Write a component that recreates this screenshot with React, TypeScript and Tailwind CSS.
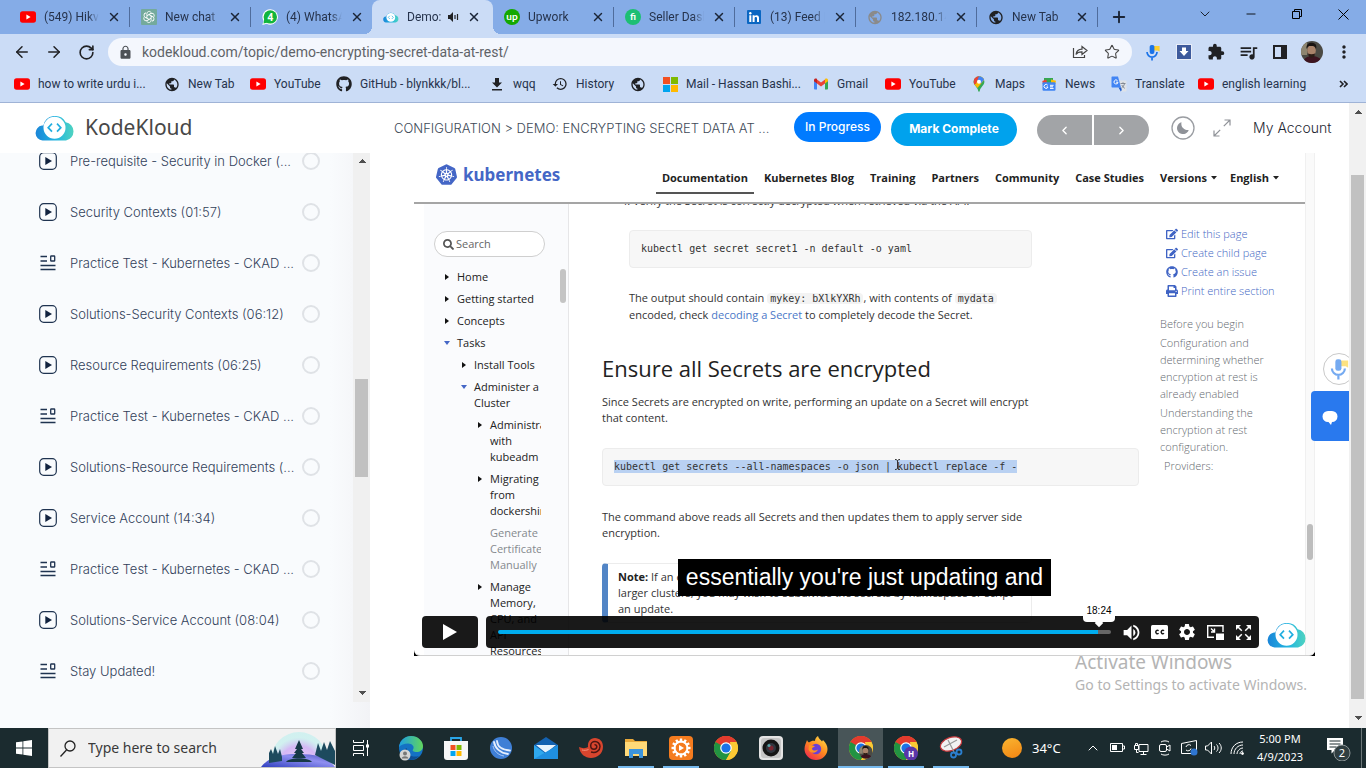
import React, { useState } from "react";
import {
  ArrowLeft, ArrowRight, RotateCw, X, Plus, ChevronDown, ChevronLeft, ChevronRight, ChevronUp, Minus, Star,
} from "lucide-react";
import { FaGithub, FaEdit, FaPrint, FaSearch } from "react-icons/fa";
import { MdPublic, MdHistory, MdExtension, MdQueueMusic, MdLock, MdVolumeUp, MdSettings, MdMoreVert } from "react-icons/md";
import { SiKubernetes } from "react-icons/si";

const UI = "font-['Noto_Sans','Open_Sans',sans-serif]";
const BROWSER = "font-['Roboto','Noto_Sans',sans-serif]";
const INTER = "font-['Inter',sans-serif]";
const OPEN = "font-['Open_Sans',sans-serif]";
const MONO = "font-['DejaVu_Sans_Mono',monospace]";

/* ---------- Icons ---------- */

const YouTube = () => (
  <svg width="16" height="16" viewBox="0 0 16 16">
    <rect x="0" y="2.3" width="16" height="11.4" rx="2.6" fill="#f00" />
    <path d="M6.4 5.6v4.8L10.6 8z" fill="#fff" />
  </svg>
);

const OpenAI = () => (
  <svg width="16" height="16" viewBox="0 0 16 16">
    <rect width="16" height="16" rx="1" fill="#74aa9c" />
    <g fill="none" stroke="#fff" strokeWidth=".9">
      {[0, 60, 120, 180, 240, 300].map((a) => (
        <path key={a} transform={`rotate(${a} 8 8)`} d="M8 5.6 5.9 6.8V4.6a2.3 2.3 0 0 1 3.9-1.5l.3.4" />
      ))}
    </g>
  </svg>
);

const Badge = ({ bg, children }: { bg: string; children: string }) => (
  <svg width="16" height="16" viewBox="0 0 16 16">
    <circle cx="8" cy="8" r="8" fill={bg} />
    <text x="8" y="11" textAnchor="middle" fontSize="10" fontWeight="700" fill="#fff" fontFamily="Lato, sans-serif">{children}</text>
  </svg>
);

const WhatsApp = () => (
  <svg width="16" height="16" viewBox="0 0 16 16">
    <path d="M8.3.2A7.7 7.7 0 1 1 4.600 14.700L.3 15.900l1.300-4A7.700 7.700 0 0 1 8.300.2z" fill="#fff" />
    <circle cx="8.300" cy="7.900" r="6.700" fill="#12b53c" />
    <path d="M2.300 10 1.500 14.600 6 13.500z" fill="#12b53c" />
    <text x="8.300" y="11.600" textAnchor="middle" fontSize="10" fontWeight="700" fill="#fff" fontFamily="Open Sans, sans-serif">4</text>
  </svg>
);

const LinkedIn = () => (
  <svg width="16" height="16" viewBox="0 0 16 16">
    <rect x="1" y="1" width="14" height="14" rx="1" fill="#0a66c2" />
    <circle cx="4.300" cy="4.300" r="1.200" fill="#fff" />
    <path d="M3.300 6.300h2V13h-2zM6.600 6.300h2v1c.9-1.700 4.400-1.600 4.400 1.500V13h-2V9.300c0-1.900-2.400-1.700-2.400 0V13h-2z" fill="#fff" />
  </svg>
);

const Cloud = ({ w, h, id }: { w: number; h: number; id: string }) => (
  <svg width={w} height={h} viewBox="0 0 40 26">
    <defs>
      <linearGradient id={id} x1="0" y1="0" x2="1" y2="0">
        <stop offset="0" stopColor="#1b85d8" />
        <stop offset=".55" stopColor="#22b6e0" />
        <stop offset="1" stopColor="#4fd3c0" />
      </linearGradient>
    </defs>
    <path d="M7.500 25.500a7.500 7.500 0 0 1-.5-14.900h1.400a12 12 0 0 1 22.300-3.400A9.300 9.300 0 0 1 31 25.500z" fill={`url(#${id})`} />
    <circle cx="19.500" cy="12.700" r="11" fill="#fff" />
    <path d="M17 8.700 13.200 12.700 17 16.700M22 8.700l3.800 4-3.800 4" fill="none" stroke="#22aee0" strokeWidth="1.700" />
  </svg>
);

const Download = () => (
  <svg width="16" height="16" viewBox="0 0 16 16" fill="#202124">
    <path d="M6 2h4v4.500h3L8 11.500 3 6.500h3zM3 13h10v1.600H3z" />
  </svg>
);

const Microsoft = ({ s = 15 }: { s?: number }) => (
  <svg width={s} height={s} viewBox="0 0 15 15">
    <path fill="#f25022" d="M0 0h7v7H0z" />
    <path fill="#7fba00" d="M8 0h7v7H8z" />
    <path fill="#00a4ef" d="M0 8h7v7H0z" />
    <path fill="#ffb900" d="M8 8h7v7H8z" />
  </svg>
);

const Gmail = () => (
  <svg width="16" height="16" viewBox="0 0 16 16">
    <path d="M1 4v8.500c0 .5.500 1 1 1h2V6.500z" fill="#4285f4" />
    <path d="M15 4v8.500c0 .5-.5 1-1 1h-2V6.500z" fill="#34a853" />
    <path d="M4 3.500 8 6.600l4-3.100v4L8 10.500 4 7.500z" fill="#ea4335" />
    <path d="M1 4c0-1.500 1.700-2.100 2.800-1.200L4 3v4.500L1 5.300z" fill="#c5221f" />
    <path d="M15 4c0-1.500-1.700-2.100-2.800-1.200L12 3v4.500l3-2.200z" fill="#fbbc04" />
  </svg>
);

const MapsPin = () => (
  <svg width="16" height="16" viewBox="0 0 16 16">
    <path d="M8 .3a5.400 5.400 0 0 1 5.400 5.400c0 3.800-4.200 5.300-4.700 9.600-.1.600-1.300.6-1.400 0C6.800 11 2.600 9.500 2.600 5.700A5.400 5.400 0 0 1 8 .3z" fill="#34a853" />
    <path d="M8 .3A5.400 5.400 0 0 1 13.100 4L6.500 12.100 3.600 8.800z" fill="#fbbc04" />
    <path d="M8 .3c2.300 0 4.300 1.400 5.100 3.400L9.800 7.500 5 3.300z" fill="#4285f4" />
    <path d="M3.900 2.300A5.400 5.400 0 0 1 8 .3L5 7.800 3.400 8.500C2.300 6.500 2.400 4.200 3.900 2.300z" fill="#ea4335" />
    <circle cx="8" cy="5.700" r="2" fill="#fff" />
  </svg>
);

const NewsIcon = () => (
  <svg width="16" height="16" viewBox="0 0 16 16">
    <path d="M3 2h9v6H3z" fill="#34a853" />
    <path d="m1.300 5 4-1.500 1 5H2z" fill="#ea4335" />
    <path d="m10 3.500 5 1.300-1 4h-4z" fill="#fbbc04" />
    <rect x="1.500" y="6.300" width="13" height="8.500" rx="1" fill="#4285f4" />
    <path d="M6.700 9.200A2 2 0 1 0 7 11H5.400M9 9.300h3.600M9 10.800h3M9 12.400h3.600" stroke="#fff" strokeWidth="1" fill="none" />
  </svg>
);

const TranslateIcon = () => (
  <svg width="16" height="16" viewBox="0 0 16 16">
    <path d="M7 4.500h7.500c.6 0 1 .4 1 1V14.500c0 .6-.4 1-1 1H10z" fill="#dfe3e8" />
    <path d="M1.500.5H7l3 11H1.500c-.6 0-1-.4-1-1v-9c0-.6.4-1 1-1z" fill="#4285f4" />
    <path d="M7.500 11.500H10l.8 2.500-1 1.500z" fill="#1a5bd0" />
    <path d="M6.500 4.600A2 2 0 1 0 7 6.200H5.100" fill="none" stroke="#fff" strokeWidth="1" />
    <path d="M9.500 7.500h5M12 6.300v1.200M13.500 7.500c-.3 2-1.500 3.500-3 4.500M10.800 9c.6 1.500 1.700 2.500 3 3.300" fill="none" stroke="#7a828c" strokeWidth=".9" />
  </svg>
);

const MicIcon = ({ s }: { s: number }) => (
  <svg width={s} height={s} viewBox="0 0 18 18">
    <path d="M10 2h6.500v6l-2-1.200H10z" fill="#fbcf2f" />
    <rect x="6" y="1" width="5" height="9.500" rx="2" fill="#1a73e8" />
    <path d="M3.200 8.500a5.300 5.300 0 0 0 10.600 0M8.500 14v3.500" fill="none" stroke="#1a73e8" strokeWidth="1.800" />
  </svg>
);

const DownloadExt = () => (
  <svg width="16" height="16" viewBox="0 0 16 16">
    <rect x=".5" y=".5" width="15" height="15" fill="#3d5a9c" stroke="#e8edf8" />
    <path d="M6 3.500h4v3.500h2.500L8 12 3.500 7H6z" fill="#fff" />
  </svg>
);

const Avatar = ({ s }: { s: number }) => (
  <svg width={s} height={s} viewBox="0 0 22 22">
    <clipPath id={`av${s}`}><circle cx="11" cy="11" r="11" /></clipPath>
    <g clipPath={`url(#av${s})`}>
      <rect width="22" height="22" fill="#4b4a44" />
      <rect x="0" y="0" width="6" height="14" fill="#8d8570" />
      <path d="M2 22c1-5 4-7 9-7s9 2 11 7z" fill="#3d1420" />
      <ellipse cx="10.500" cy="9.500" rx="4.300" ry="5.800" fill="#a9836a" />
      <path d="M5.500 8C5 3 8 1.500 11 1.700c4 .2 5 3.300 4 6.300-1-2.500-2-3-5-3-2.500 0-3.500.5-4.500 3z" fill="#191412" />
      <path d="M7 12.500c2 1 5 1 7 0-.2 3-1.800 4.200-3.500 4.200S7.200 15 7 12.500z" fill="#2c1d16" />
    </g>
  </svg>
);

const PlaySquare = () => (
  <svg width="18" height="18" viewBox="0 0 18 18">
    <rect x=".7" y=".7" width="16.600" height="16.600" rx="4" fill="none" stroke="#1f3350" strokeWidth="1.200" />
    <path d="M6.300 5v8l6.700-4z" fill="#12233f" />
  </svg>
);

const QuizLines = () => (
  <svg width="18" height="18" viewBox="0 0 18 18" fill="none" stroke="#1f3350" strokeWidth="1.300">
    <path d="M1.500 2.500h6.500M1.500 7h6.500M1.500 11.500h15M1.500 15.500h15" />
    <rect x="11.700" y="2" width="4" height="5" rx=".6" />
  </svg>
);

const Triangle = ({ dir, color = "#505050" }: { dir: "up" | "down"; color?: string }) => (
  <svg width="8" height="5" viewBox="0 0 8 5" shapeRendering="crispEdges">
    <path d={dir === "up" ? "M4 0 8 4H0z" : "M0 0h8L4 4z"} fill={color} />
  </svg>
);

const ChromeLogo = ({ children }: { children?: React.ReactNode }) => (
  <svg width="24" height="24" viewBox="0 0 24 24">
    <circle cx="12" cy="12" r="12" fill="#fbc116" />
    <path d="M12 12 1.600 6A12 12 0 0 1 22.400 6z" fill="#e33b2e" />
    <path d="M1.600 6A12 12 0 0 0 12 24l5.200-9L12 12z" fill="#229342" />
    <path d="M22.400 6A12 12 0 0 1 12 24l5.200-9L16 6z" fill="#fcc934" />
    <path d="M1.600 6 6.800 15 12 12V6z" fill="#229342" />
    <path d="M12 6h10.400A12 12 0 0 0 1.600 6L6.800 9z" fill="#e33b2e" />
    <circle cx="12" cy="12" r="5.800" fill="#fff" />
    <circle cx="12" cy="12" r="4.600" fill="#1a73e8" />
    {children}
  </svg>
);

/* ---------- Browser chrome ---------- */

const tabs: { title: string; icon: React.ReactNode; active?: boolean }[] = [
  { title: "(549) Hikvi", icon: <YouTube /> },
  { title: "New chat", icon: <OpenAI /> },
  { title: "(4) WhatsA", icon: <WhatsApp /> },
  { title: "Demo:", icon: <Cloud w={16} h={11} id="c0" />, active: true },
  { title: "Upwork", icon: <Badge bg="#14a800">up</Badge> },
  { title: "Seller Dash", icon: <Badge bg="#1dbf73">fi</Badge> },
  { title: "(13) Feed |", icon: <LinkedIn /> },
  { title: "182.180.14", icon: <MdPublic size={17} color="#8a8a8a" /> },
  { title: "New Tab", icon: <MdPublic size={17} color="#202124" /> },
];

function TabStrip() {
  return (
    <div className={`flex h-[34px] shrink-0 bg-[#85ace7] pl-[9px] text-[#26334c] ${BROWSER}`}>
      {tabs.map((t, i) => (
        <div
          key={i}
          className={
            t.active
              ? "relative flex w-[121px] items-center rounded-t-lg bg-[#cbdcf6] pl-[11px] pr-1 before:absolute before:bottom-0 before:-left-2 before:size-2 before:bg-[radial-gradient(circle_at_0_0,transparent_8px,#cbdcf6_8px)] after:absolute after:bottom-0 after:-right-2 after:size-2 after:bg-[radial-gradient(circle_at_100%_0,transparent_8px,#cbdcf6_8px)]"
              : "flex w-[121px] items-center pl-[11px]"
          }
        >
          <span className="flex w-4 shrink-0 justify-center">{t.icon}</span>
          <span className="ml-2 min-w-0 flex-1 whitespace-nowrap text-xs [mask-image:linear-gradient(to_right,black_80%,transparent)]">
            {t.title}
          </span>
          {t.active && (
            <svg className="shrink-0" width="12" height="12" viewBox="0 0 12 12" fill="none" stroke="#202124">
              <path d="M1 4h2l3-3v10L3 8H1z" fill="#202124" stroke="none" />
              <path d="M8 4v4M10.500 3v6" strokeWidth="1.200" />
            </svg>
          )}
          <button aria-label="Close tab" className="mx-2 shrink-0 text-[#1b2537]">
            <X size={14} strokeWidth={2.500} />
          </button>
          {!t.active && i !== 2 && <span className="h-5 w-px bg-[#4f6c9c]" />}
        </div>
      ))}
      <button aria-label="New tab" className="ml-3 text-[#1b2537]"><Plus size={18} strokeWidth={2.500} /></button>
      <div className="ml-auto flex items-center pb-1.5 text-black">
        <button aria-label="Search tabs" className="flex w-[46px] justify-center"><ChevronDown size={16} strokeWidth={1.200} /></button>
        <button aria-label="Minimize" className="flex w-[46px] justify-center"><Minus size={14} strokeWidth={1.500} /></button>
        <button aria-label="Restore" className="flex w-[46px] justify-center">
          <svg width="10" height="10" viewBox="0 0 10 10" fill="none" stroke="#000"><path d="M.5 2.500h7v7h-7zM2.500 2.500v-2h7v7h-2" /></svg>
        </button>
        <button aria-label="Close" className="flex w-[46px] justify-center">
          <svg width="11" height="11" viewBox="0 0 11 11" stroke="#000"><path d="M.5.5l10 10M10.500.5l-10 10" /></svg>
        </button>
      </div>
    </div>
  );
}

function Toolbar() {
  return (
    <div className={`flex h-[34px] shrink-0 items-center bg-[#cbdcf6] px-1.5 pb-0.5 pt-1 text-[#202124] ${BROWSER}`}>
      <button aria-label="Back" className="flex w-8 justify-center"><ArrowLeft size={18} /></button>
      <button aria-label="Forward" className="flex w-8 justify-center"><ArrowRight size={18} /></button>
      <button aria-label="Reload" className="flex w-8 justify-center"><RotateCw size={17} strokeWidth={2.300} /></button>
      <div className="relative ml-1.5 flex h-7 flex-1 items-center rounded-full bg-[#f4f7fd] pl-2.5 pr-2.5">
        <MdLock size={15} color="#4d5156" />
        <label htmlFor="url" className="sr-only">Address</label>
        <input id="url" type="text" defaultValue="kodekloud.com/topic/demo-encrypting-secret-data-at-rest/" className="ml-[9px] min-w-0 flex-1 bg-transparent text-sm text-[#5f6368] outline-none" />
        <button aria-label="Share" className="flex w-8 justify-center">
          <svg width="16" height="16" viewBox="0 0 16 16" fill="none" stroke="#444" strokeWidth="1.200">
            <path d="M1.500 4v9.500h11V11M10 5.200V2.500l5 4-5 4V7.800C7 7.700 5.200 8.500 4 10.500 4.500 7 6.500 5.300 10 5.200z" />
          </svg>
        </button>
        <button aria-label="Bookmark" className="-mr-1.5 flex w-8 justify-center"><Star size={16} strokeWidth={1.600} color="#444" /></button>
      </div>
      <div className="ml-1 flex items-center [&>button]:flex [&>button]:w-8 [&>button]:justify-center">
        <button aria-label="Voice search"><MicIcon s={17} /></button>
        <button aria-label="Downloader"><DownloadExt /></button>
        <button aria-label="Extensions"><MdExtension size={18} /></button>
        <button aria-label="Media"><MdQueueMusic size={21} /></button>
        <button aria-label="Side panel">
          <svg width="14" height="14" viewBox="0 0 14 14"><path d="M1 1h12v12H1z" fill="none" stroke="#202124" strokeWidth="2" /><path d="M8 1h5v12H8z" fill="#202124" /></svg>
        </button>
        <button aria-label="Profile"><Avatar s={22} /></button>
        <button aria-label="Menu"><MdMoreVert size={20} /></button>
      </div>
    </div>
  );
}

const globe = <MdPublic size={17} color="#202124" />;
const bookmarks: { w: string; icon: React.ReactNode; text: string }[] = [
  { w: "w-[150px]", icon: <YouTube />, text: "how to write urdu i..." },
  { w: "w-[86px]", icon: globe, text: "New Tab" },
  { w: "w-[86px]", icon: <YouTube />, text: "YouTube" },
  { w: "w-[153px]", icon: <FaGithub size={16} color="#202124" />, text: "GitHub - blynkkk/bl..." },
  { w: "w-[63px]", icon: <Download />, text: "wqq" },
  { w: "w-[78px]", icon: <MdHistory size={16} color="#202124" />, text: "History" },
  { w: "w-[32px]", icon: globe, text: "" },
  { w: "w-[151px]", icon: <Microsoft />, text: "Mail - Hassan Bashi..." },
  { w: "w-[72px]", icon: <Gmail />, text: "Gmail" },
  { w: "w-[86px]", icon: <YouTube />, text: "YouTube" },
  { w: "w-[70px]", icon: <MapsPin />, text: "Maps" },
  { w: "w-[70px]", icon: <NewsIcon />, text: "News" },
  { w: "w-[87px]", icon: <TranslateIcon />, text: "Translate" },
  { w: "w-[112px]", icon: <YouTube />, text: "english learning" },
];

function Bookmarks() {
  return (
    <div className={`flex h-[35px] shrink-0 items-center border-b border-[#9fb3d6] bg-[#cbdcf6] pb-0.5 pl-3.5 pr-[18px] text-xs text-[#26334c] ${BROWSER}`}>
      {bookmarks.map((b, i) => (
        <a key={i} href="#" aria-label={b.text || "New Tab"} className={`flex shrink-0 items-center gap-2 whitespace-nowrap ${b.w}`}>
          <span className="flex w-4 shrink-0 justify-center">{b.icon}</span>
          {b.text && <span>{b.text}</span>}
        </a>
      ))}
      <button aria-label="More bookmarks" className="ml-auto">
        <svg width="9" height="8" viewBox="0 0 9 8" fill="none" stroke="#202124" strokeWidth="1.600"><path d="m1 1 3 3-3 3M5 1l3 3-3 3" /></svg>
      </button>
    </div>
  );
}

/* ---------- Course page ---------- */

function PageHeader() {
  return (
    <header className={`flex h-[50px] shrink-0 items-center bg-white pl-[35px] pr-5 ${INTER}`}>
      <a href="#" className="flex w-[359px] shrink-0 items-center gap-2.5">
        <Cloud w={40} h={26} id="c1" />
        <span className={`text-[21px] text-[#484848] ${UI}`}>KodeKloud</span>
      </a>
      <span className="flex-1 whitespace-nowrap pt-0.5 text-[13px] font-light text-[#404a57]">CONFIGURATION &gt; DEMO: ENCRYPTING SECRET DATA AT ...</span>
      <button className="mb-0.5 h-[30px] w-[87px] rounded-full bg-[#007bff] text-xs font-medium text-white">In Progress</button>
      <button className="ml-2.5 mt-0.5 h-[33px] w-[126px] rounded-full bg-[#00a2ed] text-xs font-bold text-white">Mark Complete</button>
      <div className="ml-5 mt-1 flex gap-0.5 text-white">
        <button aria-label="Previous" className="flex h-[30px] w-[55px] items-center justify-center rounded-l-full bg-[#a2a4a7]"><ChevronLeft size={13} strokeWidth={2.500} /></button>
        <button aria-label="Next" className="flex h-[30px] w-[55px] items-center justify-center rounded-r-full bg-[#a2a4a7]"><ChevronRight size={13} strokeWidth={2.500} /></button>
      </div>
      <button aria-label="Dark mode" className="ml-[22px]">
        <svg width="24" height="24" viewBox="0 0 24 24">
          <circle cx="12" cy="12" r="11" fill="none" stroke="#9a9da2" strokeWidth="1.300" />
          <path d="M10.500 6.300A6 6 0 1 0 17.700 14 6.300 6.300 0 0 1 10.500 6.300z" fill="#8f9298" />
        </svg>
      </button>
      <button aria-label="Full width" className="ml-[18px]">
        <svg width="18" height="18" viewBox="0 0 18 18" fill="none" stroke="#8f9298" strokeWidth="1.200">
          <path d="M10.800 7.200 17 1M11.500 1H17v5.500M7.200 10.800 1 17M1 11.500V17h5.500" />
        </svg>
      </button>
      <a href="#" className="ml-[22px] w-[76px] whitespace-nowrap text-sm font-light text-[#1f2733]">My Account</a>
    </header>
  );
}

const lessons: { q?: boolean; t: string }[] = [
  { t: "Pre-requisite - Security in Docker (..." },
  { t: "Security Contexts (01:57)" },
  { q: true, t: "Practice Test - Kubernetes - CKAD ..." },
  { t: "Solutions-Security Contexts (06:12)" },
  { t: "Resource Requirements (06:25)" },
  { q: true, t: "Practice Test - Kubernetes - CKAD ..." },
  { t: "Solutions-Resource Requirements (..." },
  { t: "Service Account (14:34)" },
  { q: true, t: "Practice Test - Kubernetes - CKAD ..." },
  { t: "Solutions-Service Account (08:04)" },
  { q: true, t: "Stay Updated!" },
];

function Sidebar() {
  return (
    <aside className={`flex w-[370px] shrink-0 overflow-hidden bg-[linear-gradient(to_left,#f2f3f6,#f9fbfd_40px)] pb-[26px] ${INTER}`}>
      <ul className="-mt-[18px] flex-1">
        {lessons.map((l, i) => (
          <li key={i} className="flex h-[51px] items-center pl-[39px] pr-[33px]">
            {l.q ? <QuizLines /> : <PlaySquare />}
            <label htmlFor={`l${i}`} className="ml-[13px] flex-1 whitespace-nowrap pt-0.5 text-[13px] font-light text-[#32415a]">{l.t}</label>
            <input id={`l${i}`} type="checkbox" className="size-[18px] shrink-0 appearance-none rounded-full border-2 border-[#dfe2e6]" />
          </li>
        ))}
      </ul>
      <div className="flex w-[17px] flex-col items-center justify-between bg-[#f0f0f0] py-1.5">
        <Triangle dir="up" />
        <div className="mb-auto mt-[215px] h-[98px] w-[13px] bg-[#c1c1c1]" />
        <Triangle dir="down" />
      </div>
    </aside>
  );
}

type Node = { lv: number; t: string; s?: "open" | "closed" };
const tree: Node[] = [
  { lv: 0, t: "Home", s: "closed" },
  { lv: 0, t: "Getting started", s: "closed" },
  { lv: 0, t: "Concepts", s: "closed" },
  { lv: 0, t: "Tasks", s: "open" },
  { lv: 1, t: "Install Tools", s: "closed" },
  { lv: 1, t: "Administer a Cluster", s: "open" },
  { lv: 2, t: "Administration with kubeadm", s: "closed" },
  { lv: 2, t: "Migrating from dockershim", s: "closed" },
  { lv: 2, t: "Generate Certificates Manually" },
  { lv: 2, t: "Manage\nMemory,\nCPU, and\nAPI\nResources", s: "closed" },
];
const indent = ["pl-[9px]", "pl-[26px]", "pl-[42px]"];
const labelWidth = ["w-[84px]", "w-[72px]", "w-[72px]"];

const Code = ({ children }: { children: string }) => (
  <code className={`rounded-sm bg-[#f3f3f3] px-[3px] text-[10px] ${MONO}`}>{children}</code>
);

function KubernetesDocs() {
  const nav = ["Documentation", "Kubernetes Blog", "Training", "Partners", "Community", "Case Studies", "Versions", "English"];
  return (
    <div className={`flex h-full text-[11px] leading-4 text-[#333] ${OPEN}`}>
      <div className="flex min-w-0 flex-1 flex-col">
        <div className="flex h-[51px] shrink-0 border-b-2 border-[#a5a5a5] pl-[22px] pr-[26px]">
          <a href="#" className="flex items-center gap-1.5 pb-1.5 text-[#4466c6]">
            <SiKubernetes size={21} />
            <span className={`text-[17px] font-bold ${UI}`}>kubernetes</span>
          </a>
          <nav className="ml-auto flex items-start gap-4 pt-[17px] font-bold text-[#222]">
            {nav.map((n, i) => (
              <a
                key={n}
                href="#"
                className={
                  i === 0
                    ? "relative h-6 after:absolute after:-left-1.5 after:-right-1.5 after:bottom-0 after:h-0.5 after:bg-[#555]"
                    : i === 7
                      ? "-ml-[3px] flex items-center gap-1"
                      : "flex items-center gap-1"
                }
              >
                {n}
                {i > 5 && <svg width="6" height="4" viewBox="0 0 6 4"><path d="M0 0h6L3 3.500z" fill="#222" /></svg>}
              </a>
            ))}
          </nav>
        </div>
        <div className="flex min-h-0 flex-1 overflow-hidden">
          <div className="ml-2.5 flex w-[145px] shrink-0 flex-col border-r border-[#e6e6e8] bg-[#fafbfd] pl-2.5 pt-[27px]">
            <label className="flex h-[26px] w-[111px] shrink-0 items-center gap-0.5 rounded-full border border-[#cfcfcf] bg-white pl-2">
              <FaSearch size={11} color="#555" />
              <input aria-label="Search" placeholder="Search" className="w-20 bg-transparent outline-none placeholder:text-[#666]" />
            </label>
            <div className="mt-3 flex">
              <ul className="flex w-[107px] shrink-0 flex-col gap-1.5 overflow-hidden text-[#222]">
                {tree.map((n) => (
                  <li key={n.t} className={`flex gap-1.5 ${indent[n.lv]}`}>
                    <span className="flex h-4 w-2 shrink-0 items-center justify-center">
                      {n.s === "closed" && <svg width="4" height="6" viewBox="0 0 4 6"><path d="M0 0v6l4-3z" fill="#111" /></svg>}
                      {n.s === "open" && <svg width="6" height="4" viewBox="0 0 6 4"><path d="M0 0h6L3 4z" fill="#4466c6" /></svg>}
                    </span>
                    <span className={`shrink-0 whitespace-pre-line ${labelWidth[n.lv]} ${n.s ? "" : "text-[#85898e]"}`}>{n.t}</span>
                  </li>
                ))}
              </ul>
              <div className="ml-[19px] h-[34px] w-1.5 rounded-full bg-[#c4c4c4]" />
            </div>
          </div>
          <main className="flex-1 pl-[33px]">
            <div className="-mt-[11px] flex flex-col items-start">
              <p className="ml-[19px] whitespace-nowrap">4. Verify the Secret is correctly decrypted when retrieved via the API:</p>
              <pre className={`ml-[27px] mt-[21px] h-[38px] w-[403px] rounded border border-[#ececec] bg-[#f7f7f7] px-[11px] py-2.5 text-[10px] ${MONO}`}>kubectl get secret secret1 -n default -o yaml</pre>
              <p className="ml-[27px] mt-[22px] whitespace-nowrap">
                The output should contain <Code>mykey: bXlkYXRh</Code>, with contents of <Code>mydata</Code><br />
                encoded, check <a href="#" className="text-[#4a78c8]">decoding a Secret</a> to completely decode the Secret.
              </p>
              <h2 className="mt-[31px] whitespace-nowrap text-[22px] leading-7 text-[#222]">Ensure all Secrets are encrypted</h2>
              <p className="mt-3 whitespace-nowrap">
                Since Secrets are encrypted on write, performing an update on a Secret will encrypt<br />that content.
              </p>
              <pre className={`mt-[22px] h-[38px] w-[537px] rounded border border-[#ececec] bg-[#f7f7f7] px-[11px] py-2.5 text-[10px] ${MONO}`}>
                <mark className="bg-[#b9d1f2] py-px text-[#333]">kubectl get secrets --all-namespaces -o json | kubectl replace -f -</mark>
              </pre>
              <p className="mt-[23px] whitespace-nowrap">
                The command above reads all Secrets and then updates them to apply server side<br />encryption.
              </p>
              <div className="mt-[22px] w-[430px] whitespace-nowrap rounded border border-l-[6px] border-[#ececec] border-l-[#5285c6] px-2.5 py-[5px]">
                <strong className="text-[#222]">Note:</strong> If an error occurs due to a conflicting write, retry the command. For<br />
                larger clusters, you may wish to subdivide the secrets by namespace or script<br />
                an update.
              </div>
            </div>
          </main>
          <div className="w-[145px] shrink-0 pt-[21px] font-light leading-[17px]">
            <ul className="ml-1.5 flex flex-col gap-0.5 text-[#4468c4]">
              {[
                [<FaEdit size={12} color="#3f63c4" />, "Edit this page"],
                [<FaEdit size={12} color="#3f63c4" />, "Create child page"],
                [<FaGithub size={12} color="#3f63c4" />, "Create an issue"],
                [<FaPrint size={12} color="#3f63c4" />, "Print entire section"],
              ].map(([ic, t], i) => (
                <li key={i}><a href="#" className="flex items-center gap-[3px] whitespace-nowrap">{ic}{t}</a></li>
              ))}
            </ul>
            <ul className="mt-4 flex flex-col gap-0.5 whitespace-nowrap text-[#666a70]">
              <li>Before you begin</li>
              <li>Configuration and<br />determining whether<br />encryption at rest is<br />already enabled</li>
              <li>Understanding the<br />encryption at rest<br />configuration.</li>
              <li className="pl-1">Providers:</li>
            </ul>
          </div>
        </div>
      </div>
      <div className="flex w-2.5 flex-col items-center border-x border-[#f0f0f0] bg-[#fafafa] pt-[371px]">
        <div className="h-9 w-1.5 rounded-full bg-[#bdbdbd]" />
      </div>
    </div>
  );
}

function VideoControls() {
  const [pos, setPos] = useState(979);
  return (
    <div className="absolute inset-x-2 bottom-[7px] flex items-center">
      <button aria-label="Play" className="flex h-8 w-14 items-center justify-center rounded bg-black/90">
        <svg width="14" height="16" viewBox="0 0 14 16"><path d="M0 0v16l14-8z" fill="#fff" /></svg>
      </button>
      <div className="ml-2 flex h-8 flex-1 items-center rounded bg-black/90 pl-3 pr-0.5 text-white">
        <div className="relative mr-1.5 flex flex-1 items-center">
          <input
            aria-label="Progress"
            type="range"
            min={0}
            max={1000}
            value={pos}
            onChange={(e) => setPos(Number(e.target.value))}
            className="h-1 w-full appearance-none rounded-sm [&::-webkit-slider-thumb]:h-1 [&::-webkit-slider-thumb]:w-0 [&::-webkit-slider-thumb]:appearance-none"
            style={{ background: `linear-gradient(to right, #00adef ${pos / 10}%, #666 ${pos / 10}%)` }}
          />
          <output className="absolute -top-[27px] right-[-4px] flex h-[19px] w-8 justify-center rounded-sm bg-white pt-0.5 text-[10px] leading-3 text-black font-['Liberation_Sans',sans-serif] after:absolute after:top-[17px] after:size-1.5 after:rotate-45 after:bg-white">18:24</output>
        </div>
        <div className="flex items-center [&>button]:flex [&>button]:w-7 [&>button]:justify-center">
          <button aria-label="Volume"><MdVolumeUp size={21} /></button>
          <button aria-label="Captions">
            <svg width="17" height="14" viewBox="0 0 17 14">
              <rect width="17" height="14" rx="1.500" fill="#fff" />
              <path d="M7.600 5.700a1.700 1.700 0 1 0 0 2.600M13 5.700a1.700 1.700 0 1 0 0 2.600" fill="none" stroke="#191919" strokeWidth="1.500" />
            </svg>
          </button>
          <button aria-label="Settings"><MdSettings size={20} /></button>
          <button aria-label="Picture in picture">
            <svg width="17" height="15" viewBox="0 0 17 15" fill="none" stroke="#fff" strokeWidth="1.400">
              <path d="M16 7V.7H.7v11.500H7M4 3.500l3 3M7.500 3.500v3.500H4" />
              <path d="M9 8.500h8V15H9z" fill="#fff" stroke="none" />
            </svg>
          </button>
          <button aria-label="Fullscreen">
            <svg width="15" height="15" viewBox="0 0 15 15" fill="#fff" stroke="#fff" strokeWidth="1.500">
              <path d="M2 2l3.800 3.800M13 2 9.200 5.800M2 13l3.800-3.800M13 13 9.200 9.200" fill="none" />
              <path d="M0 0h5L0 5zM15 0v5L10 0zM0 15v-5l5 5zM15 15h-5l5-5z" stroke="none" />
            </svg>
          </button>
        </div>
      </div>
      <span className="ml-2 self-end"><Cloud w={40} h={26} id="c2" /></span>
    </div>
  );
}

function Content() {
  return (
    <div className="relative flex min-w-0 flex-1 flex-col bg-white">
      <section className="ml-11 mr-[34px] h-[503px] shrink-0 bg-black">
        <div className="relative h-full overflow-hidden rounded-b-md border-b border-[#d0d0d0] bg-white">
          <KubernetesDocs />
          <svg className="absolute left-[480px] top-[306px]" width="7" height="11" viewBox="0 0 7 11" fill="none" stroke="#333">
            <path d="M1 .5c1.500 0 2.500.5 2.500 1.500C3.500 1 4.500.5 6 .5M3.500 2v7M1 10.500c1.500 0 2.500-.5 2.500-1.500 0 1 1 1.500 2.500 1.500" />
          </svg>
          <div className="absolute inset-x-0 bottom-[59px] flex justify-center">
            <p className="bg-black px-2 text-[23px] leading-[37px] text-white font-['Liberation_Sans',sans-serif]">essentially you're just updating and</p>
          </div>
          <VideoControls />
        </div>
      </section>
      <div className={`-mt-2 ml-auto mr-[42px] text-[#b4b4b4] ${UI}`}>
        <p className="text-[19px] leading-7">Activate Windows</p>
        <p className="text-sm leading-[18px]">Go to Settings to activate Windows.</p>
      </div>
      <div className="absolute right-0 top-[200px] flex flex-col items-end overflow-hidden">
        <button aria-label="Dictate" className="-mr-1.5 flex size-8 items-center justify-center rounded-full border border-[#c9c9c9] bg-white"><span className="opacity-60"><MicIcon s={22} /></span></button>
        <button aria-label="Chat" className="mt-1.5 flex h-[50px] w-[38px] items-center justify-center rounded-l bg-[#2979ee] pt-1">
          <svg width="16" height="14" viewBox="0 0 16 14"><path d="M6 0h4a5.500 5.500 0 0 1 0 11l-1 3-2.500-3H6A5.500 5.500 0 0 1 6 0z" fill="#fff" /></svg>
        </button>
      </div>
    </div>
  );
}

/* ---------- Taskbar ---------- */

const Edge = () => (
  <svg width="26" height="26" viewBox="0 0 26 26">
    <defs>
      <linearGradient id="eg" x1="0" y1="0" x2="1" y2="0"><stop offset="0" stopColor="#1b9de2" /><stop offset="1" stopColor="#62d65c" /></linearGradient>
    </defs>
    <circle cx="13" cy="13" r="12" fill="#1472c4" />
    <path d="M1 12C2 5 7 1 13 1c7 0 12 5 12 10 0 4-3 6-6.500 6-3 0-4.500-1-3.500-2.500 2-3-1-6-5-6-4 0-7 1.500-9 3.500z" fill="url(#eg)" />
    <path d="M9 13c-1 6 4 10 12 8-5 6-15 5-17-2 0-3 2-5 5-6z" fill="#0e4f94" />
    <circle cx="7" cy="20" r="5.500" fill="#d5d5d5" />
    <circle cx="7" cy="18.500" r="2" fill="#777" /><path d="M3.500 23.500c1-3 6-3 7 0z" fill="#777" />
  </svg>
);
const Store = () => (
  <svg width="24" height="24" viewBox="0 0 24 24">
    <path d="M7 6V2h10v4" fill="none" stroke="#2aa6e8" strokeWidth="1.800" />
    <path d="M0 5h24v16a3 3 0 0 1-3 3H3a3 3 0 0 1-3-3z" fill="#f7f7f7" />
    <path fill="#f25022" d="M6.500 9h5v5h-5z" /><path fill="#7fba00" d="M12.500 9h5v5h-5z" /><path fill="#00a4ef" d="M6.500 15h5v5h-5z" /><path fill="#ffb900" d="M12.500 15h5v5h-5z" />
  </svg>
);
const BlueBall = () => (
  <svg width="22" height="22" viewBox="0 0 22 22">
    <circle cx="11" cy="11" r="11" fill="#3f7fd6" />
    <path d="M4 5c1 6 6 11 14 12M7 4c.500 6 5 9 13 9.500" fill="none" stroke="#e6effd" strokeWidth="1.800" strokeLinecap="round" />
    <path d="M3 9c1 5 5 9 11 10" fill="none" stroke="#a9c8f5" strokeWidth="1" />
  </svg>
);
const Mail = () => (
  <svg width="24" height="22" viewBox="0 0 24 22">
    <path d="M0 8 12 0l12 8v14H0z" fill="#1462b0" /><path d="M2 8h20l-10 8z" fill="#e9f4fc" />
    <path d="M0 8l12 9 12-9v14H0z" fill="#2fa8ee" /><path d="M0 22 24 8v14z" fill="#1f8fe0" />
  </svg>
);
const Nautilus = () => (
  <svg width="24" height="22" viewBox="0 0 24 22">
    <path d="M0 10c3 1.500 7 1.500 9 0-.5-5 2-9 7-9 4.500 0 8 3.500 8 8.500C24 17 18 21 12 21 6 21 1 17 0 10z" fill="#d8452e" />
    <path d="M12 15c5 1.500 9-1.500 9-5.500 0-3-2.500-5-5-5s-4.300 2-4.300 4.200c0 2.200 1.600 3.500 3.300 3.500s2.800-1.200 2.800-2.600S16.700 7.500 15.500 7.700" fill="none" stroke="#4d1612" strokeWidth="1.500" />
    <path d="M3 13c2 .5 4.500.5 6.500-.5" stroke="#f3927b" fill="none" />
  </svg>
);
const Folder = () => (
  <svg width="22" height="20" viewBox="0 0 22 20">
    <path d="M0 1h8l2 2h12v15H0z" fill="#e9a93a" /><path d="M0 4h22v14H0z" fill="#ffd978" />
    <path d="M4 20v-9h14v9h-4v-4H8v4z" fill="#3c94dc" />
  </svg>
);
const OrangeGear = () => (
  <svg width="24" height="24" viewBox="0 0 24 24">
    <rect width="24" height="24" rx="4" fill="#f57c1f" />
    {[0, 30, 60, 90, 120, 150, 180, 210, 240, 270, 300, 330].map((a) => (
      <rect key={a} x="10.800" y="2.500" width="2.400" height="4" fill="#fff" transform={`rotate(${a} 12 12)`} />
    ))}
    <circle cx="12" cy="12" r="6.500" fill="none" stroke="#fff" strokeWidth="2" />
    <path d="M10 9v6l5-3z" fill="#fff" />
  </svg>
);
const Camera = () => (
  <svg width="24" height="24" viewBox="0 0 24 24">
    <rect width="24" height="24" rx="4" fill="#e4e4e4" /><rect x="2" y="2" width="20" height="20" rx="3" fill="#c6c6c6" />
    <circle cx="12" cy="12" r="8.500" fill="#151515" /><circle cx="12" cy="12" r="5" fill="#30363f" />
    <circle cx="12" cy="12" r="2.500" fill="#7c2530" /><circle cx="10" cy="9.500" r="1.500" fill="#5aa5a8" />
  </svg>
);
const Firefox = () => (
  <svg width="24" height="24" viewBox="0 0 24 24">
    <defs>
      <linearGradient id="ff" x1=".9" y1="0" x2=".2" y2="1"><stop offset="0" stopColor="#ffe14b" /><stop offset=".5" stopColor="#ff8a1e" /><stop offset="1" stopColor="#f0264f" /></linearGradient>
    </defs>
    <path d="M3 4c.5 1 1 2 2 2.500C7 5 9 4.500 11 5c0-2 1-4 3-5 .5 2.500 3 4 4 5.500L19 4c3 3 4.500 6 4.500 9A11.500 11 0 0 1 12 24 11.500 11 0 0 1 .5 13C.5 9.500 2 7 3 4z" fill="url(#ff)" />
    <circle cx="12" cy="13" r="5.200" fill="#6b3fd6" />
    <path d="M5 9c3 .5 4 0 6 1.500-1.500.5-3 1-3 2.500 1 2 4 2 6 .5-1 4-8 4.500-9.500 0z" fill="#ff9320" />
  </svg>
);
const Snip = () => (
  <svg width="24" height="24" viewBox="0 0 24 24">
    <ellipse cx="12" cy="8" rx="11" ry="6.500" fill="#f2f2f2" stroke="#c8383c" strokeWidth="1.200" transform="rotate(-20 12 8)" />
    <path d="M5 11 18 4M9 4l6 12" stroke="#999" strokeWidth="1.200" />
    <circle cx="14.500" cy="19" r="2.500" fill="none" stroke="#2b7fd0" strokeWidth="1.800" /><circle cx="20" cy="16" r="2.500" fill="none" stroke="#2b7fd0" strokeWidth="1.800" />
  </svg>
);
const LakeArt = () => (
  <svg width="74" height="38" viewBox="0 0 74 38">
    <defs>
      <radialGradient id="sky" cx=".5" cy=".6" r=".5"><stop offset="0" stopColor="#f5d3f7" /><stop offset=".7" stopColor="#d5b8f5" /><stop offset="1" stopColor="#c3f0ef" stopOpacity=".7" /></radialGradient>
      <linearGradient id="lake" x1="0" y1="1" x2="1" y2="0"><stop offset="0" stopColor="#2f3fc0" /><stop offset=".6" stopColor="#8f8ff0" /><stop offset="1" stopColor="#4a4fc0" /></linearGradient>
    </defs>
    <circle cx="38" cy="31" r="28" fill="url(#sky)" />
    <path d="M0 38c8-10 18-13 37-13s30 4 37 13z" fill="url(#lake)" />
    <path d="M8 34V24l2-4 2 5 2-8 3 8 2-5 2 8v4zM54 26l3-12 3 8 3-9 3 8 3-9 5 10v14z" fill="#1d4a5e" />
    <path d="M25 33c4-5 22-5 26 0zM31 29l4-5h-2l3-4h-2l4-9 4 9h-2l3 4h-2l4 5z" fill="#173947" />
  </svg>
);

const apps: { n: string; icon: React.ReactNode; run?: string; active?: boolean }[] = [
  { n: "Edge", icon: <Edge /> },
  { n: "Store", icon: <Store /> },
  { n: "Drive", icon: <BlueBall /> },
  { n: "Mail", icon: <Mail /> },
  { n: "Nautilus", icon: <Nautilus /> },
  { n: "Explorer", icon: <Folder />, run: "w-9" },
  { n: "Player", icon: <OrangeGear />, run: "w-9" },
  { n: "Chrome", icon: <ChromeLogo /> },
  { n: "Camera", icon: <Camera /> },
  { n: "Firefox", icon: <Firefox /> },
  { n: "Chrome profile", icon: <ChromeLogo><g transform="translate(10 9) scale(.65)"><Avatar s={21} /></g></ChromeLogo>, run: "w-full", active: true },
  {
    n: "Chrome H", run: "w-9",
    icon: <ChromeLogo><circle cx="17" cy="17.500" r="7" fill="#5b36a8" /><text x="17" y="20.500" textAnchor="middle" fontSize="8" fontWeight="700" fill="#fff" fontFamily="Open Sans, sans-serif">H</text></ChromeLogo>,
  },
  { n: "Snipping Tool", icon: <Snip />, run: "w-9" },
];

function Taskbar() {
  return (
    <footer className="flex h-10 shrink-0 items-center bg-[#1b2b2f] text-white">
      <button aria-label="Start" className="flex w-12 justify-center">
        <svg width="16" height="16" viewBox="0 0 16 16" fill="#fff"><path d="M0 2.300 6.500 1.400v6.200H0zM7.300 1.300 16 0v7.600H7.300zM0 8.400h6.500v6.200L0 13.700zM7.300 8.400H16V16l-8.700-1.300z" /></svg>
      </button>
      <label className="flex h-10 w-72 items-center border border-[#c4c4c4] bg-[#f1f1f1] pl-[11px]">
        <svg width="16" height="17" viewBox="0 0 16 17" fill="none" stroke="#222" strokeWidth="1.300"><circle cx="10" cy="6" r="5" /><path d="M6.500 10 .5 16.500" /></svg>
        <input aria-label="Search" placeholder="Type here to search" className="ml-3 w-0 flex-1 bg-transparent text-sm outline-none placeholder:text-[#3a3a3a]" />
        <LakeArt />
      </label>
      <button aria-label="Task view" className="mr-[3px] flex w-[49px] justify-center">
        <svg width="16" height="16" viewBox="0 0 16 16" fill="none" stroke="#fff"><path d="M.5 0v2.500h10V0M.5 5.500h10v5H.5zM.5 16v-2.500h10V16M14.500 0v16" /><path d="M13 4.500h3v3h-3z" fill="#fff" stroke="none" /></svg>
      </button>
      {apps.map((a) => (
        <button key={a.n} aria-label={a.n} className={a.active ? "relative flex h-10 w-[45px] items-center justify-center bg-[#485558]" : "relative flex h-10 w-[45px] items-center justify-center"}>
          {a.icon}
          {a.run && <span className={`absolute bottom-0 h-0.5 bg-[#76b9ed] ${a.run}`} />}
        </button>
      ))}
      <div className={`ml-auto flex items-center text-sm ${UI}`}>
        <span className="size-5 rounded-full bg-[linear-gradient(160deg,#f9b531,#f28412)]" />
        <span className="ml-2.5 w-[49px] text-[13px]">34°C</span>
        <div className="flex items-center [&>button]:flex [&>button]:w-6 [&>button]:justify-center">
          <button aria-label="Hidden icons"><ChevronUp size={16} strokeWidth={1.500} /></button>
          <button aria-label="Battery"><svg width="15" height="10" viewBox="0 0 15 10"><path d="M.5.500h12v8H.5zM13 3h1.500v3H13" fill="none" stroke="#fff" /><path d="M2 2h5v5H2z" fill="#fff" /></svg></button>
          <button aria-label="Network"><svg width="15" height="13" viewBox="0 0 15 13" fill="none" stroke="#fff"><path d="M5 2.500h9v7H5zM9.500 9.500v3M6.500 12.500h6M.5 3.500h4v4h-4zM1.500 3.500v-2h2v2M2.500 7.500v3h2" /></svg></button>
          <button aria-label="Meet now"><svg width="12" height="16" viewBox="0 0 12 16" fill="none" stroke="#fff"><rect x=".5" y="4.500" width="7" height="7" rx="1.500" /><path d="M7.500 7l3.500-2v6L7.500 9M2 2c2-1.500 6-1.500 8 0M2 14c2 1.500 6 1.500 8 0" /></svg></button>
          <button aria-label="Updates"><svg width="17" height="16" viewBox="0 0 17 16" fill="none" stroke="#fff"><path d="M.5 3.500 15.500.5v13h-15z" /><path d="M5 7a3 3 0 0 1 5-1.500M10 8.500A3 3 0 0 1 5 10" /><circle cx="13" cy="12" r="3.500" fill="#2f76d2" stroke="none" /></svg></button>
          <button aria-label="Volume"><svg width="17" height="14" viewBox="0 0 17 14" fill="none" stroke="#fff"><path d="M.5 5h2l4-4v12l-4-4h-2zM9 5c1 1 1 3 0 4M11.500 3.500c2 2 2 5 0 7M14 2c3 3 3 7 0 10" /></svg></button>
          <button aria-label="Wi-Fi"><svg width="14" height="14" viewBox="0 0 14 14" fill="none" stroke="#fff"><path d="M1 13C1 6 6 1 13 1M4 13c0-5 4-9 9-9M7 13c0-3 3-6 6-6M10 13c0-2 1.500-3 3-3" /><circle cx="12.500" cy="12.500" r="1" fill="#fff" /></svg></button>
        </div>
        <div className="ml-[3px] w-[56px] whitespace-nowrap text-center text-[11px] leading-[18px]"><div>5:00 PM</div><div>4/9/2023</div></div>
        <button aria-label="Notifications" className="ml-2 flex w-[45px] justify-center">
          <svg width="24" height="26" viewBox="0 0 24 26">
            <path d="M0 3h16v12H8l-3.500 3.500V15H0z" fill="#fff" /><path d="M2.500 6h11M2.500 9h11M2.500 12h7" stroke="#1b2b2f" />
            <circle cx="15" cy="18" r="8" fill="#303e41" stroke="#8b9496" />
            <text x="15" y="22" textAnchor="middle" fontSize="11" fill="#fff" fontFamily="Noto Sans, sans-serif">2</text>
          </svg>
        </button>
        <span className="h-10 w-[5px] border-l border-[#6b7678]" />
      </div>
    </footer>
  );
}

export default function App() {
  return (
    <div className={`flex h-screen flex-col overflow-hidden bg-white ${UI}`}>
      <TabStrip />
      <Toolbar />
      <Bookmarks />
      <div className="flex min-h-0 flex-1">
        <div className="flex min-w-0 flex-1 flex-col">
          <PageHeader />
          <div className="flex min-h-0 flex-1">
            <Sidebar />
            <Content />
          </div>
        </div>
        <div className="flex w-[17px] shrink-0 flex-col items-center bg-[#f1f1f1] py-[7px]">
          <Triangle dir="up" />
          <div className="mb-[17px] mt-[60px] w-[13px] flex-1 bg-[#c1c1c1]" />
          <Triangle dir="down" />
        </div>
      </div>
      <Taskbar />
    </div>
  );
}
